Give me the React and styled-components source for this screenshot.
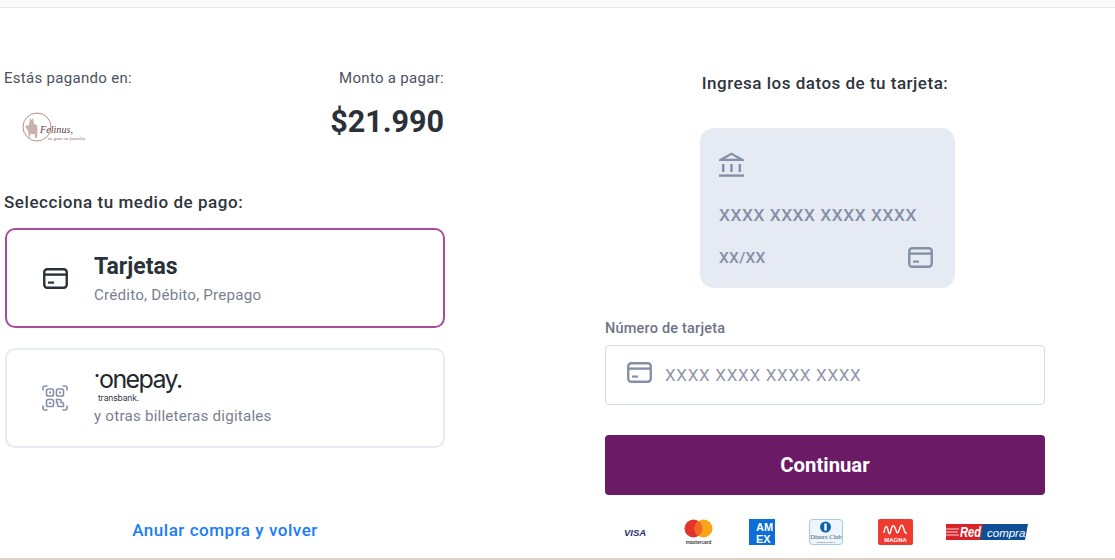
import React from "react";
import styled, { createGlobalStyle } from "styled-components";

const GlobalStyle = createGlobalStyle`
html, body {
    margin : 0;
    padding : 0;
    background : #fff;
    font-family : Roboto, "Liberation Sans", sans-serif;
}
`

const CardIcon = ({ size = 26, color = "#8590a8" }) => (
    <svg width={size} height={size * 0.84} viewBox="0 0 25 21" fill="none">
        <rect x="1.25" y="1.25" width="22.5" height="18.5" rx="3" stroke={color} strokeWidth="2.4" />
        <path d="M1.5 6.6H23.5" stroke={color} strokeWidth="2.4" />
        <path d="M5 14.6H11" stroke={color} strokeWidth="2.2" />
    </svg>
)

const QrIcon = () => (
    <svg width="26" height="26" viewBox="0 0 26 26" fill="none" stroke="#8590a8" strokeWidth="1.6">
        <path d="M1 5.5V3a2 2 0 0 1 2-2h2.5M20.5 1H23a2 2 0 0 1 2 2v2.5M1 20.5V23a2 2 0 0 0 2 2h2.5M20.5 25H23a2 2 0 0 0 2-2v-2.5" />
        <rect x="4.5" y="4" width="7" height="7" rx="1.8" />
        <rect x="14.5" y="4" width="7" height="7" rx="1.8" />
        <rect x="4.5" y="14.5" width="7" height="7" rx="1.8" />
        <path d="M14.5 14.5h3a1.5 1.5 0 0 1 1.5 1.5v1.5h1a1.5 1.5 0 0 1 1.5 1.5v2.5h-4.5a1.5 1.5 0 0 1-1.5-1.5v-2.5h-1z" />
        <rect x="7" y="6.5" width="2" height="2" fill="#8590a8" stroke="none" />
        <rect x="17" y="6.5" width="2" height="2" fill="#8590a8" stroke="none" />
        <rect x="7" y="17" width="2" height="2" fill="#8590a8" stroke="none" />
    </svg>
)

const BankIcon = () => (
    <svg width="25" height="25" viewBox="0 0 25 25" fill="#8590a8">
        <path d="M12.5 0.5 L25 7.5V9H0V7.5ZM12.5 3 L6 6.8H19Z" fillRule="evenodd" />
        <rect x="3" y="12" width="2.4" height="8" />
        <rect x="11.3" y="12" width="2.4" height="8" />
        <rect x="19.6" y="12" width="2.4" height="8" />
        <rect x="0" y="22.4" width="25" height="2.4" />
    </svg>
)

const FelinusLogo = () => (
    <svg width="66" height="32" viewBox="0 0 66 32">
        <circle cx="15" cy="15" r="14" fill="none" stroke="#b49088" strokeWidth="1" />
        <path d="M3 14l4-1 1-7 1.500 2 1.500-2 1 6 3 1 .5 6-.5 7h-2l-.5-4h-4l-1 4H7l-1-7z" fill="#c9b2ad" />
        <text x="18" y="21" textLength="33" lengthAdjust="spacingAndGlyphs" fontFamily="'Liberation Serif', serif" fontStyle="italic" fontSize="10.5" fill="#5b4441">Felinus,</text>
        <text x="26" y="27.5" textLength="37" lengthAdjust="spacingAndGlyphs" fontFamily="'Liberation Serif', serif" fontStyle="italic" fontSize="5" fill="#8a6f6a">tu gato tu familia</text>
    </svg>
)

const MastercardLogo = () => (
    <svg width="29" height="26" viewBox="0 0 29 26">
        <circle cx="9.5" cy="9.5" r="9" fill="#e6332a" />
        <circle cx="19.5" cy="9.5" r="9" fill="#f9a51a" />
        <path d="M14.5 2a9 9 0 0 1 0 15a9 9 0 0 1 0-15z" fill="#f26a21" />
        <text x="14.5" y="24.5" textAnchor="middle" fontFamily="Roboto, sans-serif" fontWeight="500" fontSize="5" fill="#333">mastercard</text>
    </svg>
)

const AmexLogo = () => (
    <svg width="26" height="26" viewBox="0 0 26 26">
        <rect width="26" height="26" fill="#0b6fd6" />
        <text x="7" y="11.5" fontFamily="'Liberation Sans', sans-serif" fontWeight="700" fontSize="11" fill="#fff">AM</text>
        <text x="7" y="23.5" fontFamily="'Liberation Sans', sans-serif" fontWeight="700" fontSize="11" fill="#fff">EX</text>
    </svg>
)

const DinersLogo = () => (
    <svg width="34" height="26" viewBox="0 0 34 26">
        <rect x="0.5" y="0.5" width="33" height="25" rx="3" fill="#eef6fb" stroke="#9fcde6" />
        <circle cx="16.5" cy="8" r="5.5" fill="#0f63a8" />
        <rect x="15.3" y="4.5" width="2.4" height="7" fill="#fff" />
        <text x="17" y="19.5" textAnchor="middle" fontFamily="'Liberation Serif', serif" fontSize="6.5" fill="#3a5a78">Diners Club</text>
        <text x="17" y="23.5" textAnchor="middle" fontFamily="'Liberation Sans', sans-serif" fontSize="2.4" fill="#3a5a78">INTERNATIONAL</text>
    </svg>
)

const MagnaLogo = () => (
    <svg width="35" height="26" viewBox="0 0 35 26">
        <rect width="35" height="26" rx="2" fill="#ee3b2f" />
        <path d="M6 14c1-8 3-8 4-3s2 5 3 0 3-6 4.5-1 2.5 5 4 0 3-5 4-1 2 6 3.5 5" fill="none" stroke="#fff" strokeWidth="1.4" />
        <text x="17.5" y="22.5" textAnchor="middle" fontFamily="'Liberation Sans', sans-serif" fontWeight="700" fontSize="6" fill="#fff">MAGNA</text>
    </svg>
)

const RedcompraLogo = () => (
    <svg width="82" height="18" viewBox="0 0 82 18">
        <path d="M0 1H38L35 17H0Z" fill="#d8232a" />
        <path d="M0 6H13M0 9H12M0 12H13" stroke="#fff" strokeWidth="0.8" />
        <path d="M37 1H82L79 17H34Z" fill="#0e4f97" />
        <text x="14" y="14" textLength="21" lengthAdjust="spacingAndGlyphs" fontFamily="'Liberation Sans', sans-serif" fontStyle="italic" fontWeight="700" fontSize="14" fill="#fff">Red</text>
        <text x="41" y="13.5" fontFamily="'Liberation Sans', sans-serif" fontStyle="italic" fontSize="11.5" fill="#fff">compra</text>
    </svg>
)

const VisaLogo = () => <VisaText>VISA</VisaText>

const paymentLogos = [
    { key: "visa", width: 60, Logo: VisaLogo },
    { key: "mastercard", width: 65, Logo: MastercardLogo },
    { key: "amex", width: 60, Logo: AmexLogo },
    { key: "diners", width: 69, Logo: DinersLogo },
    { key: "magna", width: 68, Logo: MagnaLogo },
    { key: "redcompra", width: 82, Logo: RedcompraLogo },
]

export default function App(){
    return(
        <>
        <GlobalStyle />
        <Page>
            <TopBar />
            <Main>
                <LeftColumn>
                    <Summary>
                        <div>
                            <SummaryLabel>Estás pagando en:</SummaryLabel>
                            <MerchantLogo><FelinusLogo /></MerchantLogo>
                        </div>
                        <AmountBox>
                            <SummaryLabel>Monto a pagar:</SummaryLabel>
                            <Amount>$21.990</Amount>
                        </AmountBox>
                    </Summary>
                    <SectionTitle>Selecciona tu medio de pago:</SectionTitle>
                    <OptionList>
                        <Option $selected>
                            <OptionIcon><CardIcon size={25} color="#2b323a" /></OptionIcon>
                            <div>
                                <OptionTitle>Tarjetas</OptionTitle>
                                <OptionText>Crédito, Débito, Prepago</OptionText>
                            </div>
                        </Option>
                        <Option>
                            <OptionIcon><QrIcon /></OptionIcon>
                            <OnepayBody>
                                <OnepayName><OnepayDot>·</OnepayDot>onepay.</OnepayName>
                                <Transbank>transbank.</Transbank>
                                <OptionText>y otras billeteras digitales</OptionText>
                            </OnepayBody>
                        </Option>
                    </OptionList>
                    <CancelLink href="#anular">Anular compra y volver</CancelLink>
                </LeftColumn>
                <RightColumn>
                    <CardTitle>Ingresa los datos de tu tarjeta:</CardTitle>
                    <CardPreview>
                        <BankIcon />
                        <PreviewNumber>XXXX XXXX XXXX XXXX</PreviewNumber>
                        <PreviewBottom>
                            <PreviewDate>XX/XX</PreviewDate>
                            <CardIcon size={25} />
                        </PreviewBottom>
                    </CardPreview>
                    <FieldLabel>Número de tarjeta</FieldLabel>
                    <Field>
                        <FieldIcon><CardIcon size={25} /></FieldIcon>
                        <Placeholder>XXXX XXXX XXXX XXXX</Placeholder>
                    </Field>
                    <ContinueButton>Continuar</ContinueButton>
                    <LogoRow>
                        {paymentLogos.map(({ key, width, Logo }) => (
                            <LogoCell key={key} $width={width}><Logo /></LogoCell>
                        ))}
                    </LogoRow>
                </RightColumn>
            </Main>
            <BottomLine />
        </Page>
        </>
    )
}

const Page = styled.div`
width : 1115px;
height : 560px;
display : flex;
flex-direction : column;
overflow : hidden;
background : #fff;
`
const TopBar = styled.div`
height : 7px;
flex : none;
background : #fafafa;
border-bottom : 1px solid #e9e9ec;
`
const BottomLine = styled.div`
height : 2px;
flex : none;
background : #dccfc4;
`
const Main = styled.div`
flex : 1;
min-height : 0;
display : flex;
gap : 160px;
padding-left : 5px;
`
const LeftColumn = styled.div`
width : 440px;
display : flex;
flex-direction : column;
padding-top : 60px;
`
const Summary = styled.div`
display : flex;
justify-content : space-between;
`
const SummaryLabel = styled.div`
margin : 0 0 0 -1px;
font-size : 15px;
line-height : 20px;
letter-spacing : 0.3px;
color : #4a5260;
`
const MerchantLogo = styled.div`
display : flex;
padding : 24px 0 0 17px;
`
const AmountBox = styled.div`
text-align : right;
margin-right : 1px;
`
const Amount = styled.div`
margin-top : 15px;
font-size : 30.5px;
line-height : 38px;
font-weight : 700;
color : #2a3138;
`
const SectionTitle = styled.div`
margin-top : 47px;
margin-left : -1px;
font-size : 17px;
line-height : 22px;
font-weight : 500;
letter-spacing : 0.55px;
color : #2f353c;
`
const OptionList = styled.div`
margin-top : 15px;
display : flex;
flex-direction : column;
gap : 20px;
`
const Option = styled.div`
box-sizing : border-box;
height : 100px;
display : flex;
align-items : center;
gap : 26px;
padding-left : 35px;
border-radius : 10px;
border : 2px solid ${props => props.$selected ? "#a64d9c" : "#e6eaf3"};
`
const OptionIcon = styled.div`
width : 26px;
display : flex;
justify-content : center;
`
const OptionTitle = styled.div`
font-size : 23px;
line-height : 30px;
font-weight : 700;
color : #2a3138;
`
const OptionText = styled.div`
margin-top : 3px;
font-size : 15.2px;
line-height : 20px;
letter-spacing : 0.2px;
color : #7a818e;
`
const OnepayBody = styled.div`
padding-bottom : 3px;
`
const OnepayName = styled.div`
font-family : Inter, sans-serif;
font-size : 25px;
line-height : 24px;
letter-spacing : -1.6px;
color : #24282d;
`
const OnepayDot = styled.span`
position : relative;
top : -6px;
font-size : 18px;
font-weight : 700;
letter-spacing : -1px;
`
const Transbank = styled.div`
margin : 0 0 2px 4px;
font-family : Inter, sans-serif;
font-size : 8.6px;
line-height : 9px;
letter-spacing : -0.2px;
color : #33383e;
`
const CancelLink = styled.a`
margin-top : 71px;
text-align : center;
font-size : 17px;
line-height : 22px;
font-weight : 500;
letter-spacing : 0.53px;
color : #1a7cf7;
text-decoration : none;
`
const RightColumn = styled.div`
width : 440px;
display : flex;
flex-direction : column;
padding-top : 64px;
`
const CardTitle = styled.div`
text-align : center;
font-size : 17px;
line-height : 22px;
font-weight : 500;
letter-spacing : 0.5px;
color : #2f353c;
`
const CardPreview = styled.div`
box-sizing : border-box;
width : 255px;
height : 160px;
margin : 34px 0 0 95px;
padding : 24px 22px 0 19px;
border-radius : 14px;
background : #e6eaf3;
color : #8590a8;
`
const PreviewNumber = styled.div`
margin-top : 22px;
font-size : 17.3px;
line-height : 24px;
font-weight : 500;
letter-spacing : 0.55px;
`
const PreviewBottom = styled.div`
margin-top : 20px;
display : flex;
justify-content : space-between;
align-items : center;
`
const PreviewDate = styled.div`
margin-top : 1px;
font-size : 15.5px;
font-weight : 500;
letter-spacing : 0.3px;
`
const FieldLabel = styled.div`
margin-top : 31px;
font-size : 14.5px;
line-height : 20px;
font-weight : 500;
letter-spacing : 0.2px;
color : #6d7482;
`
const Field = styled.div`
box-sizing : border-box;
height : 60px;
margin-top : 6px;
display : flex;
align-items : center;
gap : 13px;
padding-left : 21px;
border : 1px solid #d5dcec;
border-radius : 4px;
`
const FieldIcon = styled.div`
display : flex;
margin-bottom : 6px;
`
const Placeholder = styled.div`
font-size : 17px;
letter-spacing : 0.7px;
color : #8f97ab;
`
const ContinueButton = styled.button`
height : 60px;
margin-top : 30px;
padding : 0;
border : none;
border-radius : 4px;
background : #6b1a66;
color : #fff;
font-family : inherit;
font-size : 20.3px;
font-weight : 700;
`
const LogoRow = styled.div`
margin-top : 23px;
padding-left : 19px;
display : flex;
align-items : center;
height : 28px;
`
const LogoCell = styled.div`
width : ${props => props.$width}px;
flex : none;
display : flex;
align-items : center;
`
const VisaText = styled.span`
font-family : "Liberation Sans", sans-serif;
font-size : 9.5px;
font-weight : 700;
font-style : italic;
color : #28306b;
`
